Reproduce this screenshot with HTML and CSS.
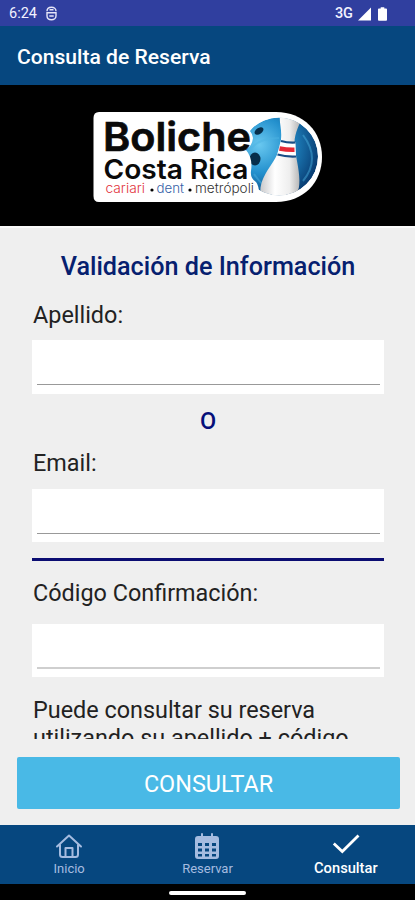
FILE: index.html
```html
<!DOCTYPE html>
<html lang="es">
<head>
<meta charset="utf-8">
<title>Consulta de Reserva</title>
<link rel="stylesheet" href="styles.css">
</head>
<body>
<div class="phone">
  <div class="status">
    <span class="clock">6:24</span>
    <svg class="debug" width="11" height="15" viewBox="0 0 11 15" fill="none" stroke="#e6e6f8" stroke-width="1.4"><path d="M1 5.2C1 2.500 3 1.200 5.500 1.200S10 2.500 10 5.200M.3 6.700h10.400M1 7v2.800c0 2.500 2 4 4.500 4s4.500-1.500 4.500-4V7M3.300 10h4.400M3.500 3.800h4"/></svg>
    <span class="net">3G</span>
    <svg class="signal" width="13" height="14" viewBox="0 0 13 14"><path d="M13 .5V13.500H0z" fill="#fff"/></svg>
    <svg class="battery" width="9" height="14" viewBox="0 0 10 15"><path d="M3 0h4v1.500h2q1 0 1 1V14q0 1-1 1H1q-1 0-1-1V2.500q0-1 1-1h2z" fill="#fff"/></svg>
  </div>
  <header class="appbar">Consulta de Reserva</header>
  <div class="banner">
    <svg width="230" height="92" viewBox="93 111 230 92" font-family="Inter, sans-serif">
      <defs>
        <radialGradient id="ball" cx=".25" cy=".35" r=".8"><stop offset="0" stop-color="#69c8f0"/><stop offset=".45" stop-color="#2390cd"/><stop offset="1" stop-color="#07396f"/></radialGradient>
        <linearGradient id="pin"><stop offset="0" stop-color="#c9c9cb"/><stop offset=".35" stop-color="#fff"/><stop offset=".7" stop-color="#eee"/><stop offset="1" stop-color="#aaa"/></linearGradient>
        <clipPath id="disc"><circle cx="279" cy="156.500" r="39"/></clipPath>
      </defs>
      <path d="M99 112H276C304 112 322 132 322 157S304 202 276 202H99Q93.500 202 93.500 196V118Q93.500 112 99 112z" fill="#fff"/>
      <g clip-path="url(#disc)">
        <circle cx="279" cy="156.500" r="39" fill="url(#ball)"/>
        <path d="M251 149q8-11 28-11M254 174q9 14 22 17M303 135q18 24 0 46" fill="none" stroke="#4db3e3" stroke-width="2" opacity=".45"/>
        <ellipse cx="259" cy="131" rx="5" ry="3" transform="rotate(-35 259 131)" fill="#062e4b"/>
        <ellipse cx="255" cy="159" rx="5.500" ry="6.500" fill="#062e4b"/>
        <path d="M280 115H302C301 124 294.500 131 294.500 143C295 157 301 172 299 187Q298 194 293 199H262C257 188 264 175 271 165C277 156 281 148 281 139C282 129 279 123 280 115z" fill="url(#pin)"/>
        <path d="M281 140Q288 143 295.500 142L296 157Q286 158 277 155z" fill="#fff"/>
        <path d="M281 141Q288 143 295.500 142.500M277.500 154.500Q286 157 296 156.500" fill="none" stroke="#174d86" stroke-width="2.200"/>
        <path d="M279.500 148.500Q287 150 294.500 149.800" fill="none" stroke="#e52835" stroke-width="4.500"/>
      </g>
      <path d="M240 129Q251 126 253 138Q252 146 246 150Q253 158 251 171Q250 178 256 182Q260 187 259 200L235 202z" fill="#fff"/>
      <g fill="#0a0a0a">
        <text x="103" y="151" font-size="39.500" font-weight="600" stroke="#0a0a0a" stroke-width=".7" textLength="148" lengthAdjust="spacingAndGlyphs">Boliche</text>
        <text x="103.500" y="178.800" font-size="27.500" font-weight="600" textLength="145" lengthAdjust="spacingAndGlyphs">Costa Rica</text>
      </g>
      <g font-size="13" font-weight="300">
        <text x="105.500" y="193" fill="#e2323a" textLength="39.500" lengthAdjust="spacingAndGlyphs">cariari</text>
        <circle cx="152" cy="190" r="1.600"/>
        <text x="156.500" y="193" fill="#365fa7" textLength="27.500" lengthAdjust="spacingAndGlyphs">dent</text>
        <circle cx="190" cy="190" r="1.600"/>
        <text x="195" y="193" fill="#333" textLength="59" lengthAdjust="spacingAndGlyphs">metrópoli</text>
      </g>
    </svg>
  </div>
  <main class="form">
    <h1>Validación de Información</h1>
    <label class="label" for="apellido">Apellido:</label>
    <div class="field"><input id="apellido" type="text"></div>
    <div class="or">O</div>
    <label class="label" for="email">Email:</label>
    <div class="field"><input id="email" type="text"></div>
    <hr>
    <label class="label" for="codigo">Código Confirmación:</label>
    <div class="field light"><input id="codigo" type="text"></div>
    <p class="help">Puede consultar su reserva<br>utilizando su apellido + código</p>
  </main>
  <div class="action"><button type="button">CONSULTAR</button></div>
  <nav>
    <a class="tab"><svg width="28" height="26" viewBox="0 0 28 26" fill="none" stroke="currentColor" stroke-width="2" stroke-linecap="round" stroke-linejoin="round"><path d="M2 13.500 14 2.500 26 13.500M5 12v9.500q0 2.500 2.500 2.500h13q2.500 0 2.500-2.500V12M10.500 23.500V15h7v8.500"/></svg><span>Inicio</span></a>
    <a class="tab"><svg width="28" height="26" viewBox="0 0 28 26"><path fill="currentColor" fill-rule="evenodd" d="M5 3h3V1q0-1 1-1t1 1v2h8V1q0-1 1-1t1 1v2h3q3 0 3 3v17q0 3-3 3H5q-3 0-3-3V6q0-3 3-3zM5 10v3h4v-3zM12 10v3h4v-3zM19 10v3h4v-3zM5 15.500v3h4v-3zM12 15.500v3h4v-3zM19 15.500v3h4v-3zM5 21v2.500h4V21zM12 21v2.500h4V21zM19 21v2.500h4V21z"/></svg><span>Reservar</span></a>
    <a class="tab active"><svg width="28" height="26" viewBox="0 0 28 26" fill="none" stroke="currentColor" stroke-width="2.800"><path d="M1.800 10.500 10.300 18.500 26.500 2.500"/></svg><span>Consultar</span></a>
  </nav>
  <div class="gesture"><i></i></div>
</div>
</body>
</html>
```
FILE: styles.css
```css
* { box-sizing: border-box; }
body { margin: 0; font-family: Roboto, sans-serif; background: #000; }
.phone { width: 415px; height: 900px; overflow: hidden; display: flex; flex-direction: column; background: #efefef; }
.status { height: 26px; flex: none; display: flex; align-items: center; padding: 1px 28px 0 9px; background: #303f9f; color: #f2f2ff; font-size: 14.5px; }
.clock { width: 37px; }
.net { margin-left: auto; font-weight: 500; margin-right: 5px; }
.signal { margin-right: 7px; }
.appbar { height: 59px; flex: none; padding: 0 17px; line-height: 61px; font-size: 21.1px; font-weight: 500; color: #fff; background: #06477f; }
.banner { height: 141px; flex: none; padding: 26px 93px; background: #000; }
.banner svg { display: block; }
.form { height: 513px; flex: none; overflow: hidden; padding: 25px 31px 0 32px; border-top: 2px solid #fafafa; display: flex; flex-direction: column; }
h1 { margin: 0; height: 28px; line-height: 28px; text-align: center; font-size: 25.2px; font-weight: 500; color: #06206f; white-space: nowrap; }
.label { display: block; height: 28px; line-height: 28px; margin: 20px 0 11px; padding-left: 1px; font-size: 23.4px; color: #222; flex: none; }
.field { height: 53.5px; flex: none; background: #fff; padding: 0 4px 8.5px 5px; }
.field input { display: block; width: 100%; height: 45px; border: 0; border-bottom: 1px solid #999; outline: 0; background: transparent; font: 22px Roboto, sans-serif; }
.light input { border-bottom: 2px solid #cfcfcf; }
.or { height: 28px; line-height: 28px; margin-top: 13.5px; text-align: center; font-size: 23.5px; font-weight: 500; color: #06107a; }
.or + .label { margin: 14px 0 11.5px; }
hr { width: 100%; height: 3px; flex: none; margin: 15.5px 0 0; border: 0; background: #0b0d72; }
hr + .label { margin: 18.5px 0 16.5px; }
.help { margin: 18.500px 0 0; padding-left: 1px; font-size: 23.4px; line-height: 28px; color: #222; white-space: nowrap; }
.action { height: 86px; flex: none; padding: 18px 15px 16px 17px; }
button { display: block; width: 100%; height: 52px; border: 0; border-radius: 2px; padding: 2px 0 0; background: #49b9e6; color: #fff; font: 23.4px Roboto, sans-serif; }
nav { height: 59px; flex: none; display: grid; grid-template-columns: repeat(3, 1fr); background: #06477f; }
.tab { display: flex; flex-direction: column; align-items: center; padding-top: 8px; color: #a5bce0; font-size: 13px; }
.tab span { line-height: 16px; margin-top: 2px; }
.active { color: #fff; font-size: 14.7px; font-weight: 500; }
.active span { margin-top: 1px; }
.gesture { flex: 1; display: flex; justify-content: center; padding-top: 7px; background: #000; }
.gesture i { width: 77px; height: 4px; border-radius: 2px; background: #fff; }
```
